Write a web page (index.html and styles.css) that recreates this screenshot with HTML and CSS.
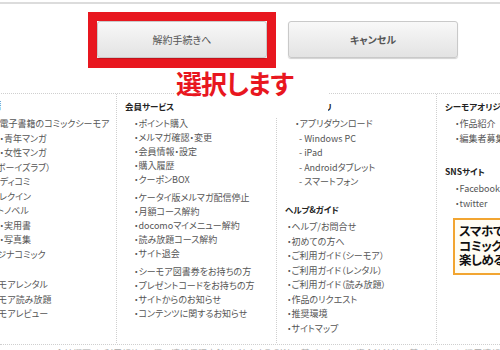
FILE: index.html
```html
<!DOCTYPE html>
<html lang="ja">
<head>
<meta charset="utf-8">
<title>解約手続き</title>
<link rel="stylesheet" href="styles.css">
</head>
<body>
<div class="topline"></div>
<div class="actions">
  <div class="mark"><button class="btn btn-primary">解約手続きへ</button></div>
  <button class="btn btn-cancel">キャンセル</button>
</div>
<div class="note">選択します</div>
<div class="sitemap">
  <div class="col col-books">
    <h3>電子書籍</h3>
    <ul class="list">
      <li>・総合電子書籍のコミックシーモア</li>
      <li>・少年・青年マンガ</li>
      <li>・少女・女性マンガ</li>
      <li>・BL（ボーイズラブ）</li>
      <li>・TLレディコミ</li>
      <li>・ハーレクイン</li>
      <li>・ライトノベル</li>
      <li>・文芸・実用書</li>
      <li>・雑誌・写真集</li>
      <li>・オリジナコミック</li>
    </ul>
    <ul class="list group-far">
      <li>・シーモアレンタル</li>
      <li>・シーモア読み放題</li>
      <li>・シーモアレビュー</li>
    </ul>
  </div>
  <div class="col col-member">
    <h3>会員サービス</h3>
    <ul class="list">
      <li>・ポイント購入</li>
      <li>・メルマガ確認・変更</li>
      <li>・会員情報・設定</li>
      <li>・購入履歴</li>
      <li>・クーポンBOX</li>
    </ul>
    <ul class="list group">
      <li>・ケータイ版メルマガ配信停止</li>
      <li>・月額コース解約</li>
      <li>・docomoマイメニュー解約</li>
      <li>・読み放題コース解約</li>
      <li>・サイト退会</li>
    </ul>
    <ul class="list group">
      <li>・シーモア図書券をお持ちの方</li>
      <li>・プレゼントコードをお持ちの方</li>
      <li>・サイトからのお知らせ</li>
      <li>・コンテンツに関するお知らせ</li>
    </ul>
  </div>
  <div class="col col-app">
    <h3>マンガアプリ</h3>
    <ul class="list apps">
      <li>・アプリダウンロード</li>
      <li class="sub">- Windows PC</li>
      <li class="sub">- iPad</li>
      <li class="sub">- Androidタブレット</li>
      <li class="sub">- スマートフォン</li>
    </ul>
    <h3 class="help-title">ヘルプ&amp;ガイド</h3>
    <ul class="list help">
      <li>・ヘルプ/お問合せ</li>
      <li>・初めての方へ</li>
      <li>・ご利用ガイド（シーモア）</li>
      <li>・ご利用ガイド（レンタル）</li>
      <li>・ご利用ガイド（読み放題）</li>
      <li>・作品のリクエスト</li>
      <li>・推奨環境</li>
      <li>・サイトマップ</li>
    </ul>
  </div>
  <div class="col col-orig">
    <h3>シーモアオリジナル</h3>
    <ul class="list wide">
      <li>・作品紹介</li>
      <li>・編集者募集</li>
    </ul>
    <h3 class="sns-title">SNSサイト</h3>
    <ul class="list wide">
      <li>・Facebookページ</li>
      <li>・twitter</li>
    </ul>
    <div class="banner">スマホでも<br>コミックシーモア<br>楽しめる！</div>
  </div>
</div>
<div class="legal">会社概要 ｜ 利用規約 ｜ 個人情報保護方針 ｜ 特定商取引法に基づく表示 ｜ 資金決済法に基づく表示 ｜ 採用情報</div>
</body>
</html>
```

FILE: styles.css
```css
html, body {
  margin: 0;
  padding: 0;
  background: #fff;
}
body {
  position: relative;
  width: 500px;
  height: 350px;
  overflow: hidden;
  font-family: "Noto Sans CJK JP", "Noto Sans", sans-serif;
  font-feature-settings: "palt";
  color: #555;
}
.topline {
  height: 2px;
  margin-top: 2px;
  background: #dcdcdc;
}
.actions {
  display: flex;
  align-items: flex-start;
  gap: 12px;
  padding: 8px 0 0 88px;
}
.mark {
  display: flex;
  border: 9px solid #e8171f;
  border-bottom-width: 10px;
}
.btn {
  width: 170px;
  height: 37px;
  box-sizing: border-box;
  border: 1px solid #c9c9c9;
  border-radius: 3px;
  background: linear-gradient(#f8f8f8, #e3e3e3);
  box-shadow: 0 1px 1px rgba(0, 0, 0, 0.18);
  font-family: inherit;
  font-feature-settings: "palt";
  font-size: 10px;
  color: #555;
  padding: 0;
}
.btn-cancel {
  margin-top: 9px;
  font-weight: bold;
  color: #555;
}
.note {
  position: absolute;
  left: 175px;
  top: 69px;
  width: 153px;
  height: 48px;
  background: #fff;
  color: #e8171f;
  font-weight: bold;
  font-size: 26px;
  letter-spacing: -1px;
  line-height: 28px;
  padding-left: 1px;
  box-sizing: border-box;
  z-index: 2;
}
.sitemap {
  display: grid;
  grid-template-columns: 160px 160px 160px 160px;
  margin: 25px 0 0 -43px;
  height: 249px;
  border-top: 1px dotted #cfcfcf;
}
.col {
  border-right: 1px dotted #cfcfcf;
  padding-top: 5px;
  overflow: hidden;
  white-space: nowrap;
}
.col h3 {
  margin: 0 0 3.5px 0;
  padding-left: 8px;
  font-size: 8.5px;
  line-height: 14.5px;
  font-weight: bold;
  color: #222;
}
.list {
  list-style: none;
  margin: 0;
  padding: 0 0 0 17px;
  font-size: 9px;
  line-height: 14.5px;
}
.col-books .list {
  padding-left: 20px;
}
.col-books h3 {
  font-size: 9px;
}
.group-far {
  margin-top: 16px;
}
.col-member .list {
  line-height: 14px;
}
.group {
  margin-top: 4px;
}
.apps {
  padding-left: 18px;
}
.apps .sub {
  padding-left: 4px;
}
.help-title {
  margin-top: 12.5px !important;
}
.help {
  padding-left: 10px;
}
.wide {
  padding-left: 18px;
}
.sns-title {
  margin-top: 18px !important;
}
.banner {
  margin: 7px 0 0 16px;
  height: 57px;
  box-sizing: border-box;
  border: 2px solid #f2a531;
  background: #fffdf4;
  padding: 4px 0 0 4px;
  font-size: 12.5px;
  line-height: 14.5px;
  font-weight: bold;
  color: #111;
  letter-spacing: -0.5px;
}
.legal {
  margin-top: 1px;
  border-top: 1px dotted #cfcfcf;
  padding: 3px 0 0 55px;
  font-size: 9px;
  line-height: 12px;
  color: #aaa;
  white-space: nowrap;
}
```
